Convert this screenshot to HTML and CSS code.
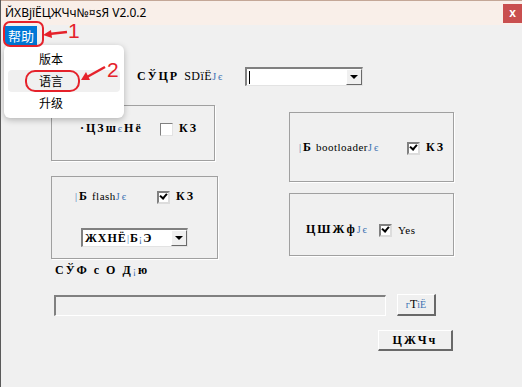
FILE: index.html
```html
<!DOCTYPE html>
<html lang="en">
<head>
    <meta charset="UTF-8">
    <title>ЙХВјїЁЦЖЧч V2.0.2</title>
    <link rel="stylesheet" href="styles.css">
</head>
<body>
<div class="window">
    <div class="titlebar">
        <span class="title">ЙХВјїЁЦЖЧч№¤sЯ V2.0.2</span>
        <span class="close">x</span>
    </div>
    <div class="menubar">
        <span class="menu-item active">帮助</span>
    </div>

    <div class="client">
        <div class="sd-row">
            <span class="lbl sd-label">СЎЦР <span class="thin">SDїЁ</span><span class="tint">Јє</span></span>
            <div class="combo sd-combo">
                <span class="combo-text caret"></span>
                <span class="combo-btn"><span class="tri"></span></span>
            </div>
        </div>

        <div class="groups">
            <div class="col col-left">
                <div class="group g-part">
                    <div class="line">
                        <span class="lbl part-label">·ЦЗш<span class="tint">є</span>Нё</span>
                        <span class="check"></span>
                        <span class="lbl">КЗ</span>
                    </div>
                </div>
                <div class="group g-flash">
                    <div class="line">
                        <span class="lbl flash-label"><span class="tint">|</span>Б<span class="thin">flash</span><span class="tint">Јє</span></span>
                        <span class="check on"></span>
                        <span class="lbl">КЗ</span>
                    </div>
                    <div class="combo flash-combo">
                        <span class="combo-text lbl">ЖХНЁ<span class="tint">|</span>Б<span class="tint">¡</span>Э</span>
                        <span class="combo-btn"><span class="tri"></span></span>
                    </div>
                </div>
            </div>
            <div class="col col-right">
                <div class="group g-boot">
                    <div class="line">
                        <span class="lbl boot-label"><span class="tint">|</span>Б<span class="thin">bootloader</span><span class="tint">Јє</span></span>
                        <span class="check on"></span>
                        <span class="lbl">КЗ</span>
                    </div>
                </div>
                <div class="group g-restart">
                    <div class="line">
                        <span class="lbl restart-label">ЦШЖф<span class="tint">Јє</span></span>
                        <span class="check on"></span>
                        <span class="thin">Yes</span>
                    </div>
                </div>
            </div>
        </div>

        <div class="lbl file-label">СЎФ с О Д<span class="tint">¡</span>ю</div>

        <div class="file-row">
            <div class="field"></div>
            <span class="btn browse"><span class="tint">г</span>Т<span class="tint">іЁ</span></span>
        </div>

        <div class="action-row">
            <span class="btn lbl make">ЦЖЧч</span>
        </div>
    </div>

    <div class="popup">
        <div class="popup-item">版本</div>
        <div class="popup-item hover">语言</div>
        <div class="popup-item">升级</div>
    </div>

    <svg class="marks" width="522" height="387" viewBox="0 0 522 387">
        <rect x="3" y="22" width="39" height="24" rx="6" fill="none" stroke="#e5222b" stroke-width="2"/>
        <line x1="66" y1="32" x2="48" y2="34" stroke="#e5222b" stroke-width="2.5"/>
        <polygon points="42,35 50,30 51,38" fill="#e5222b"/>
        <text x="67" y="38" class="mark-num">1</text>
        <rect x="25" y="71" width="53" height="20" rx="9" fill="none" stroke="#e5222b" stroke-width="2"/>
        <line x1="104" y1="67" x2="86" y2="77" stroke="#e5222b" stroke-width="2.5"/>
        <polygon points="80,80 85,72 89,80" fill="#e5222b"/>
        <text x="106" y="77" class="mark-num">2</text>
    </svg>
</div>
</body>
</html>
```

FILE: styles.css
```css
body {
    margin: 0;
    font-family: 'Liberation Serif', serif;
    font-size: 12px;
    color: #000;
}
.window {
    position: relative;
    width: 522px;
    height: 387px;
    background-color: #f0f0f0;
    overflow: hidden;
    border-left: 1px solid #5a5a5a;
    box-sizing: border-box;
}
.titlebar {
    height: 25px;
    display: flex;
    align-items: center;
    justify-content: space-between;
    background-color: #f9efe9;
    border-top: 1px solid #c4a797;
    box-sizing: border-box;
}
.title {
    font-family: 'Noto Sans', sans-serif;
    font-size: 12px;
    line-height: 14px;
    padding-left: 4px;
}
.close {
    width: 19px;
    height: 19px;
    background-color: #c94f4f;
    color: #fff;
    font-family: 'Liberation Sans', sans-serif;
    font-weight: bold;
    font-size: 12px;
    display: flex;
    align-items: center;
    justify-content: center;
}
.menubar {
    height: 20px;
    display: flex;
    align-items: center;
    padding-left: 4px;
}
.menu-item {
    font-family: 'Noto Sans CJK SC', sans-serif;
    font-size: 13px;
    padding: 0 3px;
    height: 19px;
    line-height: 19px;
}
.menu-item.active {
    background-color: #0078d7;
    color: #fff;
}

/* client area */
.client {
    display: flex;
    flex-direction: column;
}
.lbl {
    font-weight: bold;
    letter-spacing: 2px;
}
.thin {
    font-weight: normal;
    font-size: 11px;
    letter-spacing: 0.5px;
}
.tint {
    color: #3a6fb0;
    font-weight: normal;
    font-size: 10px;
}
.sd-row {
    display: flex;
    align-items: center;
    margin-top: 22px;
    padding-left: 136px;
}
.sd-label {
    width: 108px;
}
.sd-label .thin {
    font-size: 12px;
}
.combo {
    display: flex;
    height: 19px;
    background-color: #fff;
    border-top: 2px solid #808080;
    border-left: 2px solid #808080;
    border-bottom: 1px solid #e3e3e3;
    border-right: 1px solid #e3e3e3;
    box-sizing: border-box;
}
.sd-combo {
    width: 118px;
}
.combo-text {
    flex: 1;
    display: flex;
    align-items: center;
    padding-left: 2px;
}
.caret::before {
    content: "";
    width: 1px;
    height: 13px;
    background-color: #000;
}
.combo-btn {
    width: 16px;
    background-color: #f0f0f0;
    border-top: 1px solid #fff;
    border-left: 1px solid #fff;
    border-right: 1px solid #696969;
    border-bottom: 1px solid #696969;
    box-sizing: border-box;
    display: flex;
    align-items: center;
    justify-content: center;
}
.tri {
    width: 0;
    height: 0;
    border-left: 4px solid transparent;
    border-right: 4px solid transparent;
    border-top: 4px solid #000;
}

.groups {
    display: flex;
    align-items: flex-start;
    padding-left: 50px;
    gap: 71px;
}
.col {
    display: flex;
    flex-direction: column;
}
.group {
    border: 1px solid #a0a0a0;
    box-shadow: 1px 1px 0 #fff;
    box-sizing: border-box;
}
.line {
    display: flex;
    align-items: center;
}
.check {
    width: 13px;
    height: 13px;
    background-color: #fff;
    border-top: 1px solid #808080;
    border-left: 1px solid #808080;
    border-right: 1px solid #e3e3e3;
    border-bottom: 1px solid #e3e3e3;
    box-sizing: border-box;
    margin-right: 6px;
    margin-top: 2px;
    position: relative;
}
.check.on {
    border: 2px solid #808080;
    border-right-color: #dcdcdc;
    border-bottom-color: #dcdcdc;
}
.check.on::after {
    content: "";
    position: absolute;
    left: 1px;
    top: 0;
    width: 5px;
    height: 3px;
    border-left: 2px solid #000;
    border-bottom: 2px solid #000;
    transform: rotate(-50deg);
}

.g-part {
    width: 164px;
    height: 56px;
    margin-top: 19px;
    padding: 15px 0 0 28px;
}
.part-label {
    width: 80px;
}
.g-flash {
    width: 167px;
    height: 83px;
    margin-top: 15px;
    padding: 12px 0 0 23px;
}
.flash-label {
    width: 82px;
}
.flash-label .thin,
.boot-label .thin {
    margin-left: 3px;
}
.flash-combo {
    width: 107px;
    margin: 24px 0 0 6px;
}
.flash-combo .combo-text {
    letter-spacing: 1px;
    font-size: 12px;
}
.col-right {
    width: 165px;
}
.g-boot {
    height: 70px;
    margin-top: 26px;
    padding: 27px 0 0 9px;
}
.boot-label {
    width: 108px;
}
.g-restart {
    height: 63px;
    margin-top: 11px;
    padding: 28px 0 0 16px;
}
.restart-label {
    width: 73px;
}

.file-label {
    margin: 4px 0 0 54px;
}
.file-row {
    display: flex;
    align-items: center;
    margin-top: 16px;
    padding-left: 53px;
    gap: 11px;
}
.field {
    width: 332px;
    height: 21px;
    border-top: 2px solid #808080;
    border-left: 2px solid #808080;
    border-bottom: 1px solid #fff;
    border-right: 1px solid #fff;
    box-sizing: border-box;
}
.btn {
    display: flex;
    align-items: center;
    justify-content: center;
    box-sizing: border-box;
    border-top: 1px solid #fff;
    border-left: 1px solid #fff;
    border-right: 2px solid #696969;
    border-bottom: 2px solid #696969;
    background-color: #f0f0f0;
}
.browse {
    width: 39px;
    height: 22px;
}
.action-row {
    display: flex;
    justify-content: flex-end;
    margin-top: 14px;
    padding-right: 69px;
}
.make {
    width: 75px;
    height: 21px;
}

/* popup menu and annotations lie over the dialog */
.popup {
    position: absolute;
    left: 3px;
    top: 45px;
    width: 120px;
    height: 73px;
    padding: 3px 4px;
    box-sizing: border-box;
    background-color: #fff;
    border-radius: 6px;
    box-shadow: 0 2px 6px rgba(0, 0, 0, 0.25);
    font-family: 'Noto Sans CJK SC', sans-serif;
    font-size: 12px;
}
.popup-item {
    height: 22px;
    line-height: 22px;
    padding-left: 31px;
    border-radius: 4px;
}
.popup-item.hover {
    background-color: #f0f0f0;
}
.marks {
    position: absolute;
    left: 0;
    top: 0;
}
.mark-num {
    font-family: 'Liberation Sans', sans-serif;
    font-size: 21px;
    fill: #e5222b;
}
```
